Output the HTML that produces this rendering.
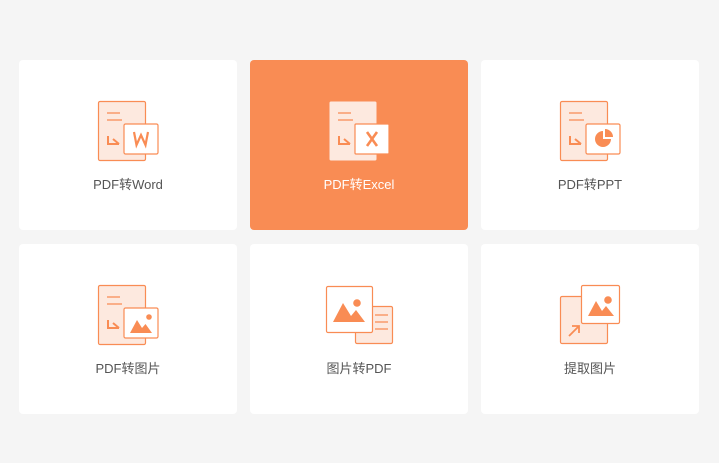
<!DOCTYPE html>
<html><head><meta charset="utf-8"><style>
body{margin:0;width:719px;height:463px;background:#f5f5f5;position:relative;overflow:hidden;font-family:"Liberation Sans","Noto Sans CJK SC",sans-serif}
.c{position:absolute;width:218px;height:170px;background:#fff;border-radius:4px}
.c.a{background:#f98c54}
.t{position:absolute;left:0;width:218px;top:114px;text-align:center;font-size:13px;color:#555}
.a .t{color:#fff}
svg{position:absolute;left:0;top:0}
</style></head><body>
<div class="c" style="left:19px;top:60px"><div class="t">PDF转Word</div></div>
<div class="c a" style="left:250px;top:60px"><div class="t">PDF转Excel</div></div>
<div class="c" style="left:481px;top:60px"><div class="t">PDF转PPT</div></div>
<div class="c" style="left:19px;top:244px"><div class="t">PDF转图片</div></div>
<div class="c" style="left:250px;top:244px"><div class="t">图片转PDF</div></div>
<div class="c" style="left:481px;top:244px"><div class="t">提取图片</div></div>
<svg width="719" height="463" fill="none" stroke="#f98c54" stroke-width="1.2">
<defs>
<g id="doc"><rect x="0.5" y="0.5" width="47" height="59" rx="1.5" fill="#fde9df"/><path d="M9 12H22M9 19H24" stroke-width="1.3"/><path d="M10 35V43H21" stroke-width="2"/><path d="M15 38L21 43" stroke-width="2"/></g>
</defs>
<g transform="translate(98,101)"><use href="#doc"/><rect x="26" y="23" width="34" height="30" rx="1.5" fill="#fff"/><path d="M36 31L38.5 44L43 34L47.5 44L50 31" stroke-width="2.2"/></g>
<g transform="translate(329,101)"><rect x="0.5" y="0.5" width="47" height="59" rx="1.5" fill="#fde9df" stroke="none"/><path d="M9 12H22M9 19H24" stroke-width="1.3"/><path d="M10 35V43H21M15 38L21 43" stroke-width="2"/><rect x="26" y="23" width="34" height="30" rx="1" fill="#fff"/><path d="M38 31L48 45M48 31L38 45" stroke-width="2.6"/></g>
<g transform="translate(560,101)"><use href="#doc"/><rect x="26" y="23" width="34" height="30" rx="1.5" fill="#fff"/><circle cx="43" cy="38" r="8" fill="#f98c54" stroke="none"/><path d="M43 38V29A9 9 0 0 1 52 38Z" fill="#fff" stroke="none"/><path d="M45 28A8 8 0 0 1 53 36H45Z" fill="#f98c54" stroke="none"/></g>
<g transform="translate(98,285)"><use href="#doc"/><rect x="26" y="23" width="34" height="30" rx="1.5" fill="#fff"/><path d="M32 48L39 35L44 43L47.5 39L54 48Z" fill="#f98c54" stroke="none"/><circle cx="51" cy="32" r="2.8" fill="#f98c54" stroke="none"/></g>
<g transform="translate(326,286)"><rect x="29.5" y="20.5" width="37" height="37" rx="1.5" fill="#fde9df"/><path d="M49 29H62M49 36H62M49 43H62" stroke-width="1.3"/><rect x="0.5" y="0.5" width="46" height="46" rx="1.5" fill="#fff"/><path d="M7 36L17 17L25 30L30 24L39 36Z" fill="#f98c54" stroke="none"/><circle cx="31" cy="17" r="3.8" fill="#f98c54" stroke="none"/></g>
<g transform="translate(560,285)"><rect x="0.5" y="11.5" width="47" height="47" rx="1.5" fill="#fde9df"/><path d="M9 51L19 41M12 41H19V48" stroke-width="1.8"/><rect x="21.5" y="0.5" width="38" height="38" rx="1.5" fill="#fff"/><path d="M28 31L36 16L42 26L46 21L54 31Z" fill="#f98c54" stroke="none"/><circle cx="48" cy="15" r="3.8" fill="#f98c54" stroke="none"/></g>
</svg>
</body></html>
